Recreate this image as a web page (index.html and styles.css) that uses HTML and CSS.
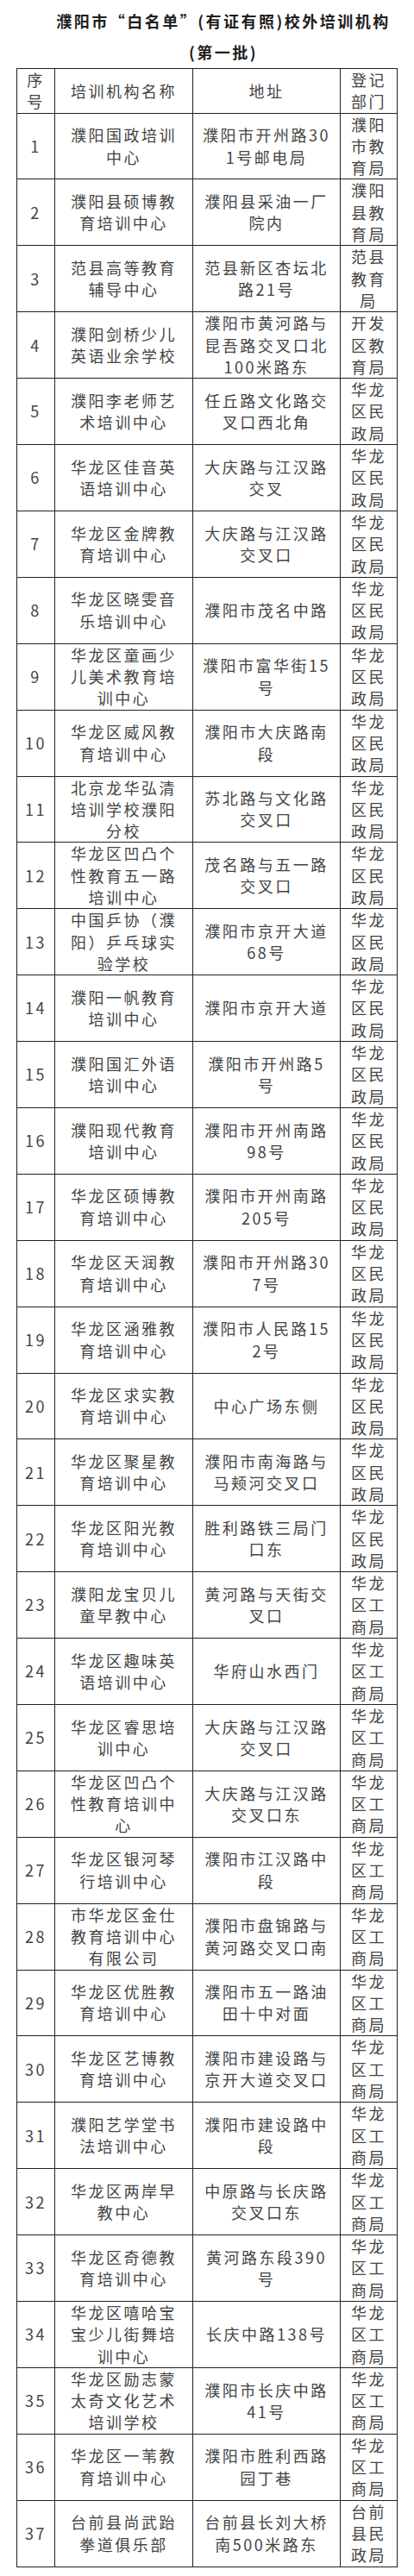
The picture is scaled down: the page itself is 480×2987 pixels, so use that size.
FILE: index.html
```html
<!DOCTYPE html>
<html lang="zh-CN">
<head>
<meta charset="utf-8">
<title>濮阳市白名单校外培训机构</title>
<link rel="stylesheet" href="styles.css">
</head>
<body>
<div class="title">
  <div class="title-line">濮阳市“白名单”(有证有照)校外培训机构</div>
  <div class="title-line">(第一批)</div>
</div>
<table class="list">
  <colgroup>
    <col class="c-no"><col class="c-name"><col class="c-addr"><col class="c-dept">
  </colgroup>
  <thead>
    <tr><th class="no">序号</th><th>培训机构名称</th><th class="addr">地址</th><th>登记部门</th></tr>
  </thead>
  <tbody>
    <tr><td class="no">1</td><td>濮阳国政培训中心</td><td class="addr">濮阳市开州路301号邮电局</td><td>濮阳市教育局</td></tr>
    <tr><td class="no">2</td><td>濮阳县硕博教育培训中心</td><td class="addr">濮阳县采油一厂院内</td><td>濮阳县教育局</td></tr>
    <tr><td class="no">3</td><td>范县高等教育辅导中心</td><td class="addr">范县新区杏坛北路21号</td><td>范县教育局</td></tr>
    <tr><td class="no">4</td><td>濮阳剑桥少儿英语业余学校</td><td class="addr">濮阳市黄河路与昆吾路交叉口北100米路东</td><td>开发区教育局</td></tr>
    <tr><td class="no">5</td><td>濮阳李老师艺术培训中心</td><td class="addr">任丘路文化路交叉口西北角</td><td>华龙区民政局</td></tr>
    <tr><td class="no">6</td><td>华龙区佳音英语培训中心</td><td class="addr">大庆路与江汉路交叉</td><td>华龙区民政局</td></tr>
    <tr><td class="no">7</td><td>华龙区金牌教育培训中心</td><td class="addr">大庆路与江汉路交叉口</td><td>华龙区民政局</td></tr>
    <tr><td class="no">8</td><td>华龙区晓雯音乐培训中心</td><td class="addr">濮阳市茂名中路</td><td>华龙区民政局</td></tr>
    <tr><td class="no">9</td><td>华龙区童画少儿美术教育培训中心</td><td class="addr">濮阳市富华街15号</td><td>华龙区民政局</td></tr>
    <tr><td class="no">10</td><td>华龙区威风教育培训中心</td><td class="addr">濮阳市大庆路南段</td><td>华龙区民政局</td></tr>
    <tr><td class="no">11</td><td>北京龙华弘清培训学校濮阳分校</td><td class="addr">苏北路与文化路交叉口</td><td>华龙区民政局</td></tr>
    <tr><td class="no">12</td><td>华龙区凹凸个性教育五一路培训中心</td><td class="addr">茂名路与五一路交叉口</td><td>华龙区民政局</td></tr>
    <tr><td class="no">13</td><td>中国乒协（濮阳）乒乓球实验学校</td><td class="addr">濮阳市京开大道68号</td><td>华龙区民政局</td></tr>
    <tr><td class="no">14</td><td>濮阳一帆教育培训中心</td><td class="addr">濮阳市京开大道</td><td>华龙区民政局</td></tr>
    <tr><td class="no">15</td><td>濮阳国汇外语培训中心</td><td class="addr">濮阳市开州路5号</td><td>华龙区民政局</td></tr>
    <tr><td class="no">16</td><td>濮阳现代教育培训中心</td><td class="addr">濮阳市开州南路98号</td><td>华龙区民政局</td></tr>
    <tr><td class="no">17</td><td>华龙区硕博教育培训中心</td><td class="addr">濮阳市开州南路205号</td><td>华龙区民政局</td></tr>
    <tr><td class="no">18</td><td>华龙区天润教育培训中心</td><td class="addr">濮阳市开州路307号</td><td>华龙区民政局</td></tr>
    <tr><td class="no">19</td><td>华龙区涵雅教育培训中心</td><td class="addr">濮阳市人民路152号</td><td>华龙区民政局</td></tr>
    <tr><td class="no">20</td><td>华龙区求实教育培训中心</td><td class="addr">中心广场东侧</td><td>华龙区民政局</td></tr>
    <tr><td class="no">21</td><td>华龙区聚星教育培训中心</td><td class="addr">濮阳市南海路与马颊河交叉口</td><td>华龙区民政局</td></tr>
    <tr><td class="no">22</td><td>华龙区阳光教育培训中心</td><td class="addr">胜利路铁三局门口东</td><td>华龙区民政局</td></tr>
    <tr><td class="no">23</td><td>濮阳龙宝贝儿童早教中心</td><td class="addr">黄河路与天街交叉口</td><td>华龙区工商局</td></tr>
    <tr><td class="no">24</td><td>华龙区趣味英语培训中心</td><td class="addr">华府山水西门</td><td>华龙区工商局</td></tr>
    <tr><td class="no">25</td><td>华龙区睿思培训中心</td><td class="addr">大庆路与江汉路交叉口</td><td>华龙区工商局</td></tr>
    <tr><td class="no">26</td><td>华龙区凹凸个性教育培训中心</td><td class="addr">大庆路与江汉路交叉口东</td><td>华龙区工商局</td></tr>
    <tr><td class="no">27</td><td>华龙区银河琴行培训中心</td><td class="addr">濮阳市江汉路中段</td><td>华龙区工商局</td></tr>
    <tr><td class="no">28</td><td>市华龙区金仕教育培训中心有限公司</td><td class="addr">濮阳市盘锦路与黄河路交叉口南</td><td>华龙区工商局</td></tr>
    <tr><td class="no">29</td><td>华龙区优胜教育培训中心</td><td class="addr">濮阳市五一路油田十中对面</td><td>华龙区工商局</td></tr>
    <tr><td class="no">30</td><td>华龙区艺博教育培训中心</td><td class="addr">濮阳市建设路与京开大道交叉口</td><td>华龙区工商局</td></tr>
    <tr><td class="no">31</td><td>濮阳艺学堂书法培训中心</td><td class="addr">濮阳市建设路中段</td><td>华龙区工商局</td></tr>
    <tr><td class="no">32</td><td>华龙区两岸早教中心</td><td class="addr">中原路与长庆路交叉口东</td><td>华龙区工商局</td></tr>
    <tr><td class="no">33</td><td>华龙区奇德教育培训中心</td><td class="addr">黄河路东段390号</td><td>华龙区工商局</td></tr>
    <tr><td class="no">34</td><td>华龙区嘻哈宝宝少儿街舞培训中心</td><td class="addr">长庆中路138号</td><td>华龙区工商局</td></tr>
    <tr><td class="no">35</td><td>华龙区励志蒙太奇文化艺术培训学校</td><td class="addr">濮阳市长庆中路41号</td><td>华龙区工商局</td></tr>
    <tr><td class="no">36</td><td>华龙区一苇教育培训中心</td><td class="addr">濮阳市胜利西路园丁巷</td><td>华龙区工商局</td></tr>
    <tr><td class="no">37</td><td>台前县尚武跆拳道俱乐部</td><td class="addr">台前县长刘大桥南500米路东</td><td>台前县民政局</td></tr>
  </tbody>
</table>
</body>
</html>
```

FILE: styles.css
```css
html, body {
  margin: 0;
  padding: 0;
  background: #ffffff;
}

body {
  font-family: "Noto Sans CJK SC", "Noto Sans", sans-serif;
  color: #444444;
}

.title {
  padding: 6px 0 0 38px;
  text-align: center;
  font-size: 18px;
  font-weight: 700;
  letter-spacing: 2.5px;
  line-height: 36px;
  color: #1e1e1e;
}

.list {
  margin: 1px 0 0 19px;
  width: 441px;
  table-layout: fixed;
  border-collapse: collapse;
  font-size: 18px;
  letter-spacing: 2.5px;
  line-height: 25.3px;
}

.c-no { width: 44px; }
.c-name { width: 160px; }
.c-addr { width: 171px; }
.c-dept { width: 66px; }

.list th,
.list td {
  border: 1px solid #222222;
  padding: 0 10px;
  text-align: center;
  vertical-align: middle;
  font-weight: 400;
  color: #444444;
  word-break: break-all;
}

.list .no {
  padding: 0 4px;
}

.list .addr {
  padding: 0 9px;
}
```
